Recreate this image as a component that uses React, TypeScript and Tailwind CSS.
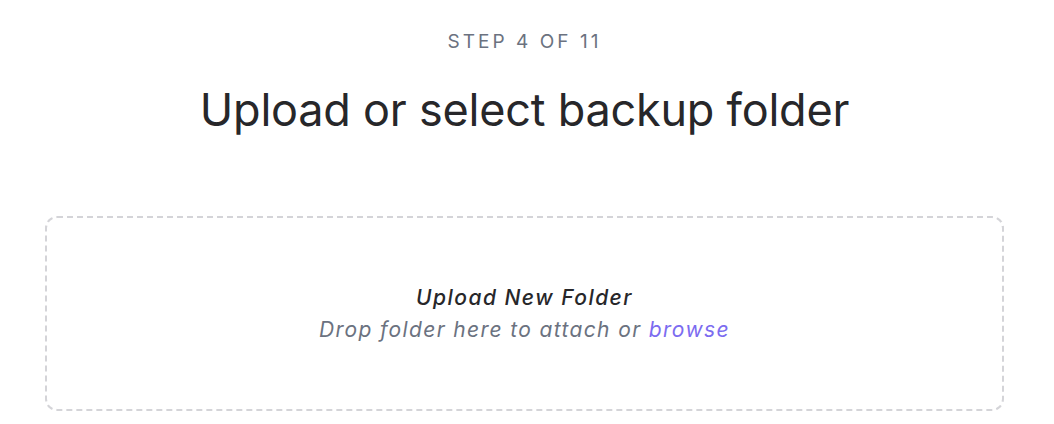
export default function App() {
  return (
    <div className="min-h-[424px] w-full bg-white font-['Inter',sans-serif] pl-[45px] pr-[50px]">
      <div className="flex flex-col items-center pt-[30px]">
        <div className="text-[19px] leading-[24px] tracking-[0.16em] text-[#6b7280]">STEP 4 OF 11</div>
        <h1 className="mt-[29px] text-[45px] leading-[54px] font-normal text-[#27272a] tracking-[-0.005em]">
          Upload or select backup folder
        </h1>
      </div>
      <div className="mt-[79px] h-[195px] rounded-[12px] border-2 border-dashed border-[#d4d4d8] flex flex-col items-center justify-center">
        <div className="text-[21px] leading-[32px] italic font-medium tracking-[0.07em] text-[#27272a]">Upload New Folder</div>
        <div className="text-[21px] leading-[32px] italic tracking-[0.065em] text-[#6b7280]">
          Drop folder here to attach or <span className="text-[#7c6cf0]">browse</span>
        </div>
      </div>
    </div>
  );
}
